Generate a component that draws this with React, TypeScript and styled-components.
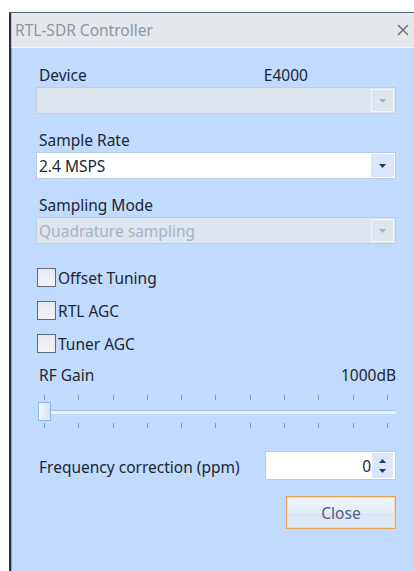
import styled, { createGlobalStyle } from 'styled-components';

const GlobalStyle = createGlobalStyle`
  html, body {
    margin: 0;
    padding: 0;
    background: #ffffff;
  }
  body {
    font-family: 'Noto Sans', 'Open Sans', sans-serif;
  }
`;

const TICKS = Array.from({ length: 11 }, (_, i) => i);

const CHECK_OPTIONS = ['Offset Tuning', 'RTL AGC', 'Tuner AGC'];

const DownArrow = ({ color }: { color: string }) => (
  <svg width="7" height="4" viewBox="0 0 7 4">
    <path d="M0 0 H7 L3.5 4 Z" fill={color} />
  </svg>
);

const UpArrow = ({ color }: { color: string }) => (
  <svg width="7" height="4" viewBox="0 0 7 4">
    <path d="M0 4 H7 L3.5 0 Z" fill={color} />
  </svg>
);

const CrossIcon = () => (
  <svg width="12" height="12" viewBox="0 0 12 12">
    <path d="M1 1 L11 11 M11 1 L1 11" stroke="#6f7987" strokeWidth="1.6" />
  </svg>
);

const App = () => {
  return (
    <Page>
      <GlobalStyle />
      <Window>
        <TitleBar>
          <Title>RTL-SDR Controller</Title>
          <CrossIcon />
        </TitleBar>
        <Body>
          <Field>
            <LabelRow>
              <Label>Device</Label>
              <DeviceName>E4000</DeviceName>
            </LabelRow>
            <Combo disabled>
              <ComboText disabled />
              <ArrowButton disabled>
                <DownArrow color="#a9b1bb" />
              </ArrowButton>
            </Combo>
          </Field>

          <Field>
            <Label>Sample Rate</Label>
            <Combo>
              <ComboText>2.4 MSPS</ComboText>
              <ArrowButton>
                <DownArrow color="#253a66" />
              </ArrowButton>
            </Combo>
          </Field>

          <Field>
            <Label>Sampling Mode</Label>
            <Combo disabled>
              <ComboText disabled>Quadrature sampling</ComboText>
              <ArrowButton disabled>
                <DownArrow color="#a9b1bb" />
              </ArrowButton>
            </Combo>
          </Field>

          <CheckList>
            {CHECK_OPTIONS.map((option) => (
              <CheckRow key={option}>
                <CheckBox />
                <CheckLabel>{option}</CheckLabel>
              </CheckRow>
            ))}
          </CheckList>

          <GainRow>
            <Label>RF Gain</Label>
            <Label>1000dB</Label>
          </GainRow>

          <Slider>
            <TickRow>
              {TICKS.map((t) => (
                <Tick key={t} />
              ))}
            </TickRow>
            <Track>
              <Thumb />
            </Track>
            <TickRow>
              {TICKS.map((t) => (
                <Tick key={t} />
              ))}
            </TickRow>
          </Slider>

          <FreqRow>
            <Label>Frequency correction (ppm)</Label>
            <NumberBox>
              <NumberValue>0</NumberValue>
              <Spinner>
                <UpArrow color="#253a66" />
                <DownArrow color="#253a66" />
              </Spinner>
            </NumberBox>
          </FreqRow>

          <ButtonRow>
            <CloseButton>Close</CloseButton>
          </ButtonRow>
        </Body>
      </Window>
    </Page>
  );
};

export default App;

const Page = styled.div`
  width: 414px;
  height: 571px;
  padding: 12px 0 0 9px;
  box-sizing: border-box;
  overflow: hidden;
`;

const Window = styled.div`
  width: 405px;
  height: 559px;
  display: flex;
  flex-direction: column;
  border-left: 2px solid #2b323c;
  border-top: 1px solid #5b6878;
  box-sizing: border-box;
`;

const TitleBar = styled.div`
  height: 34px;
  display: flex;
  align-items: center;
  justify-content: space-between;
  padding: 0 5px 0 3px;
  background: #e4e7eb;
  border-bottom: 1px solid #f4f6f8;
  border-left: 1px solid #b8c2cf;
`;

const Title = styled.span`
  font-size: 15.5px;
  color: #8c97a5;
`;

const Body = styled.div`
  flex: 1;
  display: flex;
  flex-direction: column;
  padding: 16px 18px 0 24px;
  background: #c0dbfe;
  border-left: 1px solid #8f9fb3;
`;

const Field = styled.div`
  display: flex;
  flex-direction: column;
  gap: 3px;
  margin-bottom: 15px;
`;

const LabelRow = styled.div`
  display: flex;
`;

const Label = styled.span`
  height: 20px;
  line-height: 22px;
  padding-left: 3px;
  font-size: 15.5px;
  color: #1e2633;
`;

const DeviceName = styled(Label)`
  margin-left: 174px;
`;

const Combo = styled.div<{ disabled?: boolean }>`
  height: 27px;
  display: flex;
  align-items: stretch;
  box-sizing: border-box;
  background: ${(p) => (p.disabled ? '#dde5ee' : '#ffffff')};
  border: 1px solid ${(p) => (p.disabled ? '#c3cbd5' : '#b5cde8')};
`;

const ComboText = styled.div<{ disabled?: boolean }>`
  flex: 1;
  display: flex;
  align-items: center;
  padding-left: 2px;
  font-size: 15.5px;
  color: ${(p) => (p.disabled ? '#a8b3c0' : '#1e2633')};
`;

const ArrowButton = styled.div<{ disabled?: boolean }>`
  width: 23px;
  margin: 1px 1px 1px 0;
  display: flex;
  align-items: center;
  justify-content: center;
  box-sizing: border-box;
  background: ${(p) => (p.disabled ? '#dde5ee' : '#d9e7f9')};
  border: 1px solid ${(p) => (p.disabled ? '#f3f6f9' : '#d9e7f9')};
`;

const CheckList = styled.div`
  display: flex;
  flex-direction: column;
  gap: 14px;
  margin-top: 9px;
`;

const CheckRow = styled.div`
  display: flex;
  align-items: center;
  height: 19px;
  gap: 2px;
  padding-left: 1px;
`;

const CheckBox = styled.div`
  width: 19px;
  height: 19px;
  box-sizing: border-box;
  border: 1px solid #5d6a7b;
  background: linear-gradient(#e6e9ee, #f2f4f7);
`;

const CheckLabel = styled.span`
  font-size: 15.5px;
  color: #1e2633;
`;

const GainRow = styled.div`
  display: flex;
  justify-content: space-between;
  margin-top: 11px;
`;

const Slider = styled.div`
  display: flex;
  flex-direction: column;
  margin-top: 11px;
`;

const TickRow = styled.div`
  height: 6px;
  display: flex;
  justify-content: space-between;
  padding: 0 8px 0 8px;
`;

const Tick = styled.div`
  width: 1px;
  height: 5px;
  background: #7d9cc2;
`;

const Track = styled.div`
  position: relative;
  height: 19px;
  margin: 1px 0 2px;
  display: flex;
  align-items: center;
  &::before {
    content: '';
    flex: 1;
    margin-left: 2px;
    height: 3px;
    background: #e9f1fb;
    border-top: 1px solid #a8c4e6;
  }
`;

const Thumb = styled.div`
  position: absolute;
  left: 2px;
  top: 0;
  width: 13px;
  height: 19px;
  box-sizing: border-box;
  border: 1px solid #8db6ea;
  background: linear-gradient(90deg, #f2f6fc, #d9e4f3);
`;

const FreqRow = styled.div`
  display: flex;
  align-items: center;
  justify-content: space-between;
  margin-top: 22px;
`;

const NumberBox = styled.div`
  width: 131px;
  height: 29px;
  display: flex;
  box-sizing: border-box;
  background: #ffffff;
  border: 1px solid #b5cde8;
`;

const NumberValue = styled.div`
  flex: 1;
  display: flex;
  align-items: center;
  justify-content: flex-end;
  padding-right: 1px;
  font-size: 15.5px;
  color: #1e2633;
`;

const Spinner = styled.div`
  width: 21px;
  margin: 1px 2px 1px 0;
  display: flex;
  flex-direction: column;
  align-items: center;
  justify-content: center;
  gap: 6px;
  background: #d9e7f9;
`;

const ButtonRow = styled.div`
  display: flex;
  justify-content: flex-end;
  margin-top: 16px;
`;

const CloseButton = styled.div`
  width: 110px;
  height: 33px;
  display: flex;
  align-items: center;
  justify-content: center;
  box-sizing: border-box;
  border: 1px solid #e8a24f;
  box-shadow: inset 0 0 0 1px #f7d9a9;
  background: linear-gradient(#eef4fc 0%, #e4eefb 50%, #d9e6f7 51%, #e2ecf9 100%);
  font-size: 15.5px;
  color: #4d6180;
`;
